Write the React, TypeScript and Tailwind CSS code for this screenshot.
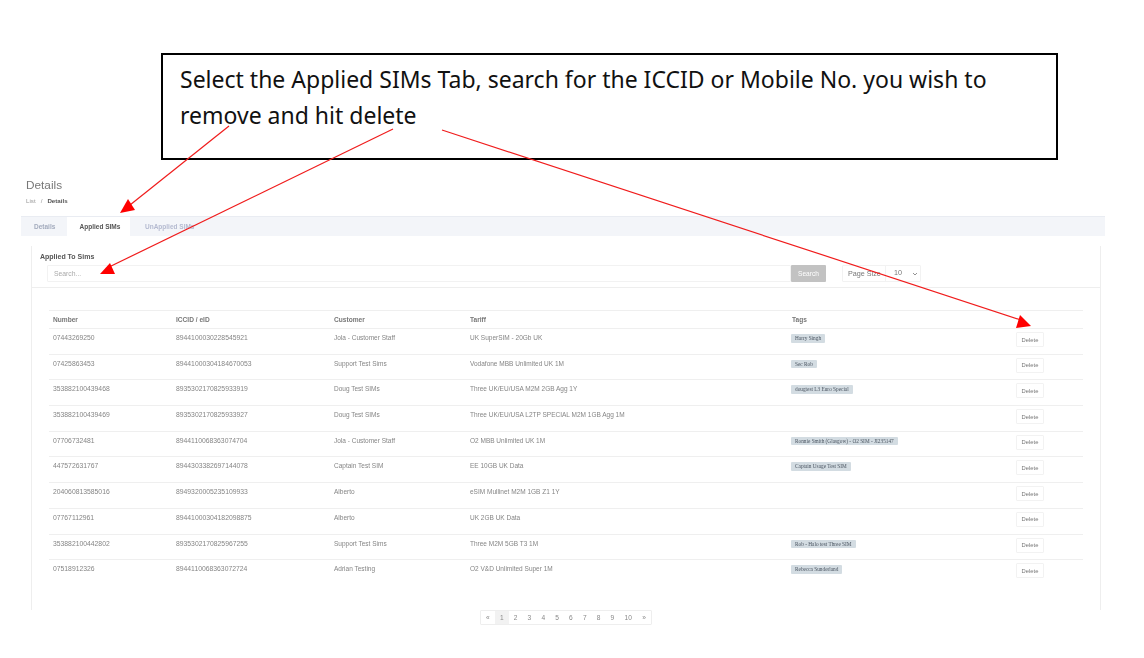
import React from 'react';

// ── Data ─────────────────────────────────────────────────────────────────────

const ROWS = [
  { number: '07443269250', iccid: '8944100030228545921', customer: 'Jola - Customer Staff', tariff: 'UK SuperSIM - 20Gb UK', tag: 'Harry Singh' },
  { number: '07425863453', iccid: '89441000304184670053', customer: 'Support Test Sims', tariff: 'Vodafone MBB Unlimited UK 1M', tag: 'Sec Rob' },
  { number: '353882100439468', iccid: '8935302170825933919', customer: 'Doug Test SIMs', tariff: 'Three UK/EU/USA M2M 2GB Agg 1Y', tag: 'dougtest L3 Euro Special' },
  { number: '353882100439469', iccid: '8935302170825933927', customer: 'Doug Test SIMs', tariff: 'Three UK/EU/USA L2TP SPECIAL M2M 1GB Agg 1M', tag: '' },
  { number: '07706732481', iccid: '8944110068363074704', customer: 'Jola - Customer Staff', tariff: 'O2 MBB Unlimited UK 1M', tag: 'Ronnie Smith (Glasgow) - O2 SIM - JI235147' },
  { number: '447572631767', iccid: '8944303382697144078', customer: 'Captain Test SIM', tariff: 'EE 10GB UK Data', tag: 'Captain Usage Test SIM' },
  { number: '204060813585016', iccid: '8949320005235109933', customer: 'Alberto', tariff: 'eSIM Mullinet M2M 1GB Z1 1Y', tag: '' },
  { number: '07767112961', iccid: '89441000304182098875', customer: 'Alberto', tariff: 'UK 2GB UK Data', tag: '' },
  { number: '353882100442802', iccid: '8935302170825967255', customer: 'Support Test Sims', tariff: 'Three M2M 5GB T3 1M', tag: 'Rob - Halo test Three SIM' },
  { number: '07518912326', iccid: '8944110068363072724', customer: 'Adrian Testing', tariff: 'O2 V&D Unlimited Super 1M', tag: 'Rebecca Sunderland' },
];

const PAGES = ['«', '1', '2', '3', '4', '5', '6', '7', '8', '9', '10', '»'];

const COLS = 'grid grid-cols-[123px_158px_136px_322px_224px_71px]';

// ── Sub-components ───────────────────────────────────────────────────────────

function Arrows() {
  return (
    <svg className="absolute left-0 top-0 pointer-events-none" width="1144" height="658" viewBox="0 0 1144 658">
      <g stroke="#f01c1c" strokeWidth="1.2">
        <line x1="229" y1="126" x2="130" y2="205" />
        <line x1="393" y1="129" x2="107" y2="268" />
        <line x1="442" y1="130" x2="1024" y2="321" />
      </g>
      <g fill="#ff0000">
        <polygon points="120,213 128,199 135,210" />
        <polygon points="100,274 110,263 115,274" />
        <polygon points="1031,326 1016,328 1020,315" />
      </g>
    </svg>
  );
}

function Row({ row }: { row: (typeof ROWS)[number] }) {
  return (
    <div className={`${COLS} h-[25.7px] border-b border-[#efefef] text-[6.8px] leading-[8px] text-[#858585] last:border-b-0`}>
      <span className="pl-1 pt-[5px]">{row.number}</span>
      <span className="pl-1 pt-[5px]">{row.iccid}</span>
      <span className="pl-1 pt-[5px] text-[6.5px]">{row.customer}</span>
      <span className="pl-1 pt-[5px] text-[6.5px]">{row.tariff}</span>
      <div className="pl-[3px] pt-[5px]">
        {row.tag && (
          <span className="inline-block h-[8.5px] rounded-[1px] bg-[#d3dce2] px-1 font-['Liberation_Serif',serif] text-[5.3px] leading-[8.5px] text-[#4a5460]">
            {row.tag}
          </span>
        )}
      </div>
      <div className="pl-1 pt-[3px]">
        <button type="button" className="h-[15px] w-[28px] rounded-[1px] border border-[#f2f2f2] bg-white text-[5.8px] text-[#777]">
          Delete
        </button>
      </div>
    </div>
  );
}

// ── Main component ───────────────────────────────────────────────────────────

export default function App() {
  return (
    <div className="relative h-[658px] w-[1144px] overflow-hidden bg-white pt-[53px] font-['Liberation_Sans',Arial,sans-serif]">
      {/* Callout */}
      <div className="ml-[161px] h-[107px] w-[897px] border-2 border-black pl-[17px] pt-[7px] font-['Noto_Sans',sans-serif] text-[23px] leading-[35.5px] text-[#111]">
        Select the Applied SIMs Tab, search for the ICCID or Mobile No. you wish to
        <br />
        remove and hit delete
      </div>

      {/* Embedded page */}
      <div className="ml-[21px] mt-[18px] w-[1084px] blur-[0.35px]">
        <h1 className="pl-[5px] text-[11.8px] leading-[14px] text-[#777]">Details</h1>
        <div className="mt-[5px] flex gap-[5px] pl-[5px] text-[6.2px] leading-[8px] text-[#999]">
          <span>List</span>
          <span>/</span>
          <span className="font-bold text-[#555]">Details</span>
        </div>

        {/* Tabs */}
        <div className="mt-[11px] flex h-[20px] items-center border-t border-[#e9ecf2] bg-[#f3f5f9] text-[6.5px] font-bold">
          <span className="w-[46px] pl-[13px] text-[#a3abbd]">Details</span>
          <span className="flex h-full w-[63px] items-center justify-center bg-white pl-[3px] text-[#555]">Applied SIMs</span>
          <span className="pl-[15px] text-[#b4bad0]">UnApplied SIMs</span>
        </div>

        {/* Card */}
        <div className="ml-[10px] mt-[10px] h-[364px] w-[1070px] border-x border-[#eee]">
          <div className="h-[42px] border-b border-[#eee] pl-2 pt-[7px]">
            <div className="text-[7px] font-bold leading-[8px] text-[#555]">Applied To Sims</div>
            <div className="ml-[7px] mt-1 flex h-[17px] items-center">
              <input
                readOnly
                placeholder="Search..."
                className="h-full w-[744px] rounded-[1px] border border-[#f2f2f2] px-[6px] text-[6.8px] placeholder:text-[#aaa]"
              />
              <span className="flex h-full w-[35px] items-center justify-center rounded-[1px] bg-[#c2c2c2] text-[6.6px] text-white">
                Search
              </span>
              <div className="ml-4 flex h-full w-[79px] items-center rounded-[1px] border border-[#f2f2f2] text-[7.2px] text-[#777]">
                <span className="w-[43px] border-r border-[#f2f2f2] pl-[5px] leading-[15px]">Page Size</span>
                <span className="pl-2">10</span>
                <svg className="ml-[10px]" width="6" height="4" viewBox="0 0 6 4" fill="none" stroke="#777" strokeWidth="0.8">
                  <path d="M1 1l2 2 2-2" />
                </svg>
              </div>
            </div>
          </div>

          {/* Table */}
          <div className="ml-[17px] mt-[22px] w-[1034px]">
            <div className={`${COLS} h-[19px] items-center border-y border-[#efefef] text-[6.6px] font-bold text-[#777]`}>
              <span className="pl-1">Number</span>
              <span className="pl-1">ICCID / eID</span>
              <span className="pl-1">Customer</span>
              <span className="pl-1">Tariff</span>
              <span className="pl-1">Tags</span>
              <span />
            </div>
            {ROWS.map((row) => (
              <Row key={row.number} row={row} />
            ))}
          </div>
        </div>

        {/* Pagination */}
        <div className="ml-[459px] flex h-[15px] w-[172px] items-center rounded-[1px] border border-[#eee] text-[6.6px] text-[#888]">
          {PAGES.map((p, i) => (
            <span
              key={i}
              className={`flex h-full flex-1 items-center justify-center ${p === '1' ? 'bg-[#f2f2f2]' : ''} ${p === '10' ? 'flex-[1.3]' : ''}`}
            >
              {p}
            </span>
          ))}
        </div>
      </div>

      <Arrows />
    </div>
  );
}
